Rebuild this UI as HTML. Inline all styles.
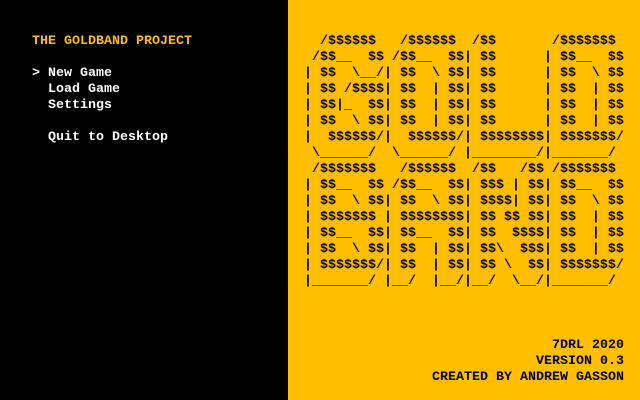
<!DOCTYPE html>
<html><head><meta charset="utf-8"><style>
html,body{margin:0;padding:0;width:640px;height:400px;overflow:hidden;background:#000}
pre{margin:0;position:absolute;font-family:"Liberation Mono",monospace;font-weight:bold;font-size:13.33px;line-height:16px;white-space:pre}
#right{position:absolute;left:288px;top:0;width:352px;height:400px;background:#FFBF00}
</style></head><body>
<div id="right"></div>
<pre style="left:32px;top:34px;color:#FFBF00">THE GOLDBAND PROJECT</pre>
<pre style="left:32px;top:66px;color:#fff">&gt; New Game
  Load Game
  Settings

  Quit to Desktop</pre>
<pre style="left:304px;top:34px;color:#000">  /$$$$$$   /$$$$$$  /$$       /$$$$$$$ 
 /$$__  $$ /$$__  $$| $$      | $$__  $$
| $$  \__/| $$  \ $$| $$      | $$  \ $$
| $$ /$$$$| $$  | $$| $$      | $$  | $$
| $$|_  $$| $$  | $$| $$      | $$  | $$
| $$  \ $$| $$  | $$| $$      | $$  | $$
|  $$$$$$/|  $$$$$$/| $$$$$$$$| $$$$$$$/
 \______/  \______/ |________/|_______/ 
 /$$$$$$$   /$$$$$$  /$$   /$$ /$$$$$$$ 
| $$__  $$ /$$__  $$| $$$ | $$| $$__  $$
| $$  \ $$| $$  \ $$| $$$$| $$| $$  \ $$
| $$$$$$$ | $$$$$$$$| $$ $$ $$| $$  | $$
| $$__  $$| $$__  $$| $$  $$$$| $$  | $$
| $$  \ $$| $$  | $$| $$\  $$$| $$  | $$
| $$$$$$$/| $$  | $$| $$ \  $$| $$$$$$$/
|_______/ |__/  |__/|__/  \__/|_______/ </pre>
<pre style="right:16px;top:338px;color:#000;text-align:right">7DRL 2020
VERSION 0.3
CREATED BY ANDREW GASSON</pre>
</body></html>
